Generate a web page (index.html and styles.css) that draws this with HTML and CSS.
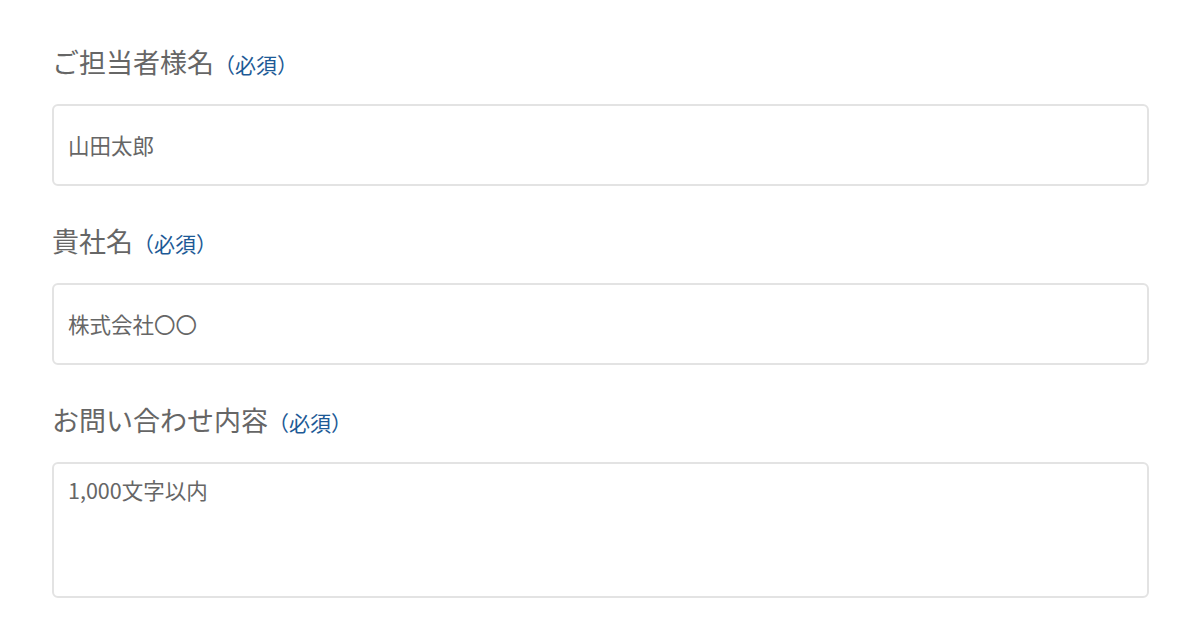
FILE: index.html
```html
<!DOCTYPE html>
<html lang="ja">
<head>
    <meta charset="UTF-8">
    <meta name="viewport" content="width=device-width, initial-scale=1.0">
    <title>お問い合わせ</title>
    <link rel="stylesheet" href="styles.css">
</head>
<body>
    <form class="contact-form">
        <div class="form-group">
            <label for="name">ご担当者様名<span class="required">（必須）</span></label>
            <input type="text" id="name" placeholder="山田太郎">
        </div>
        <div class="form-group">
            <label for="company">貴社名<span class="required">（必須）</span></label>
            <input type="text" id="company" placeholder="株式会社〇〇">
        </div>
        <div class="form-group">
            <label for="message">お問い合わせ内容<span class="required">（必須）</span></label>
            <textarea id="message" placeholder="1,000文字以内"></textarea>
        </div>
    </form>
</body>
</html>
```

FILE: styles.css
```css
body {
    font-family: "Noto Sans CJK JP", "Noto Sans", sans-serif;
    background-color: #fff;
    margin: 0;
    padding: 44px 51px 0 52px;
}
.form-group {
    margin-bottom: 37px;
}
label {
    display: block;
    height: 36px;
    font-size: 27px;
    line-height: 36px;
    color: #666;
    margin-bottom: 24px;
}
.required {
    font-size: 21px;
    line-height: 1;
    color: #1d5a96;
}
input, textarea {
    display: block;
    box-sizing: border-box;
    width: 100%;
    font-family: inherit;
    font-size: 21.5px;
    color: #555;
    border: 2px solid #e3e3e3;
    border-radius: 6px;
    padding: 0 14px;
    outline: none;
}
input {
    height: 82px;
    padding-bottom: 2px;
}
textarea {
    height: 136px;
    padding-top: 10px;
    resize: none;
}
input::placeholder, textarea::placeholder {
    color: #666;
}
```
